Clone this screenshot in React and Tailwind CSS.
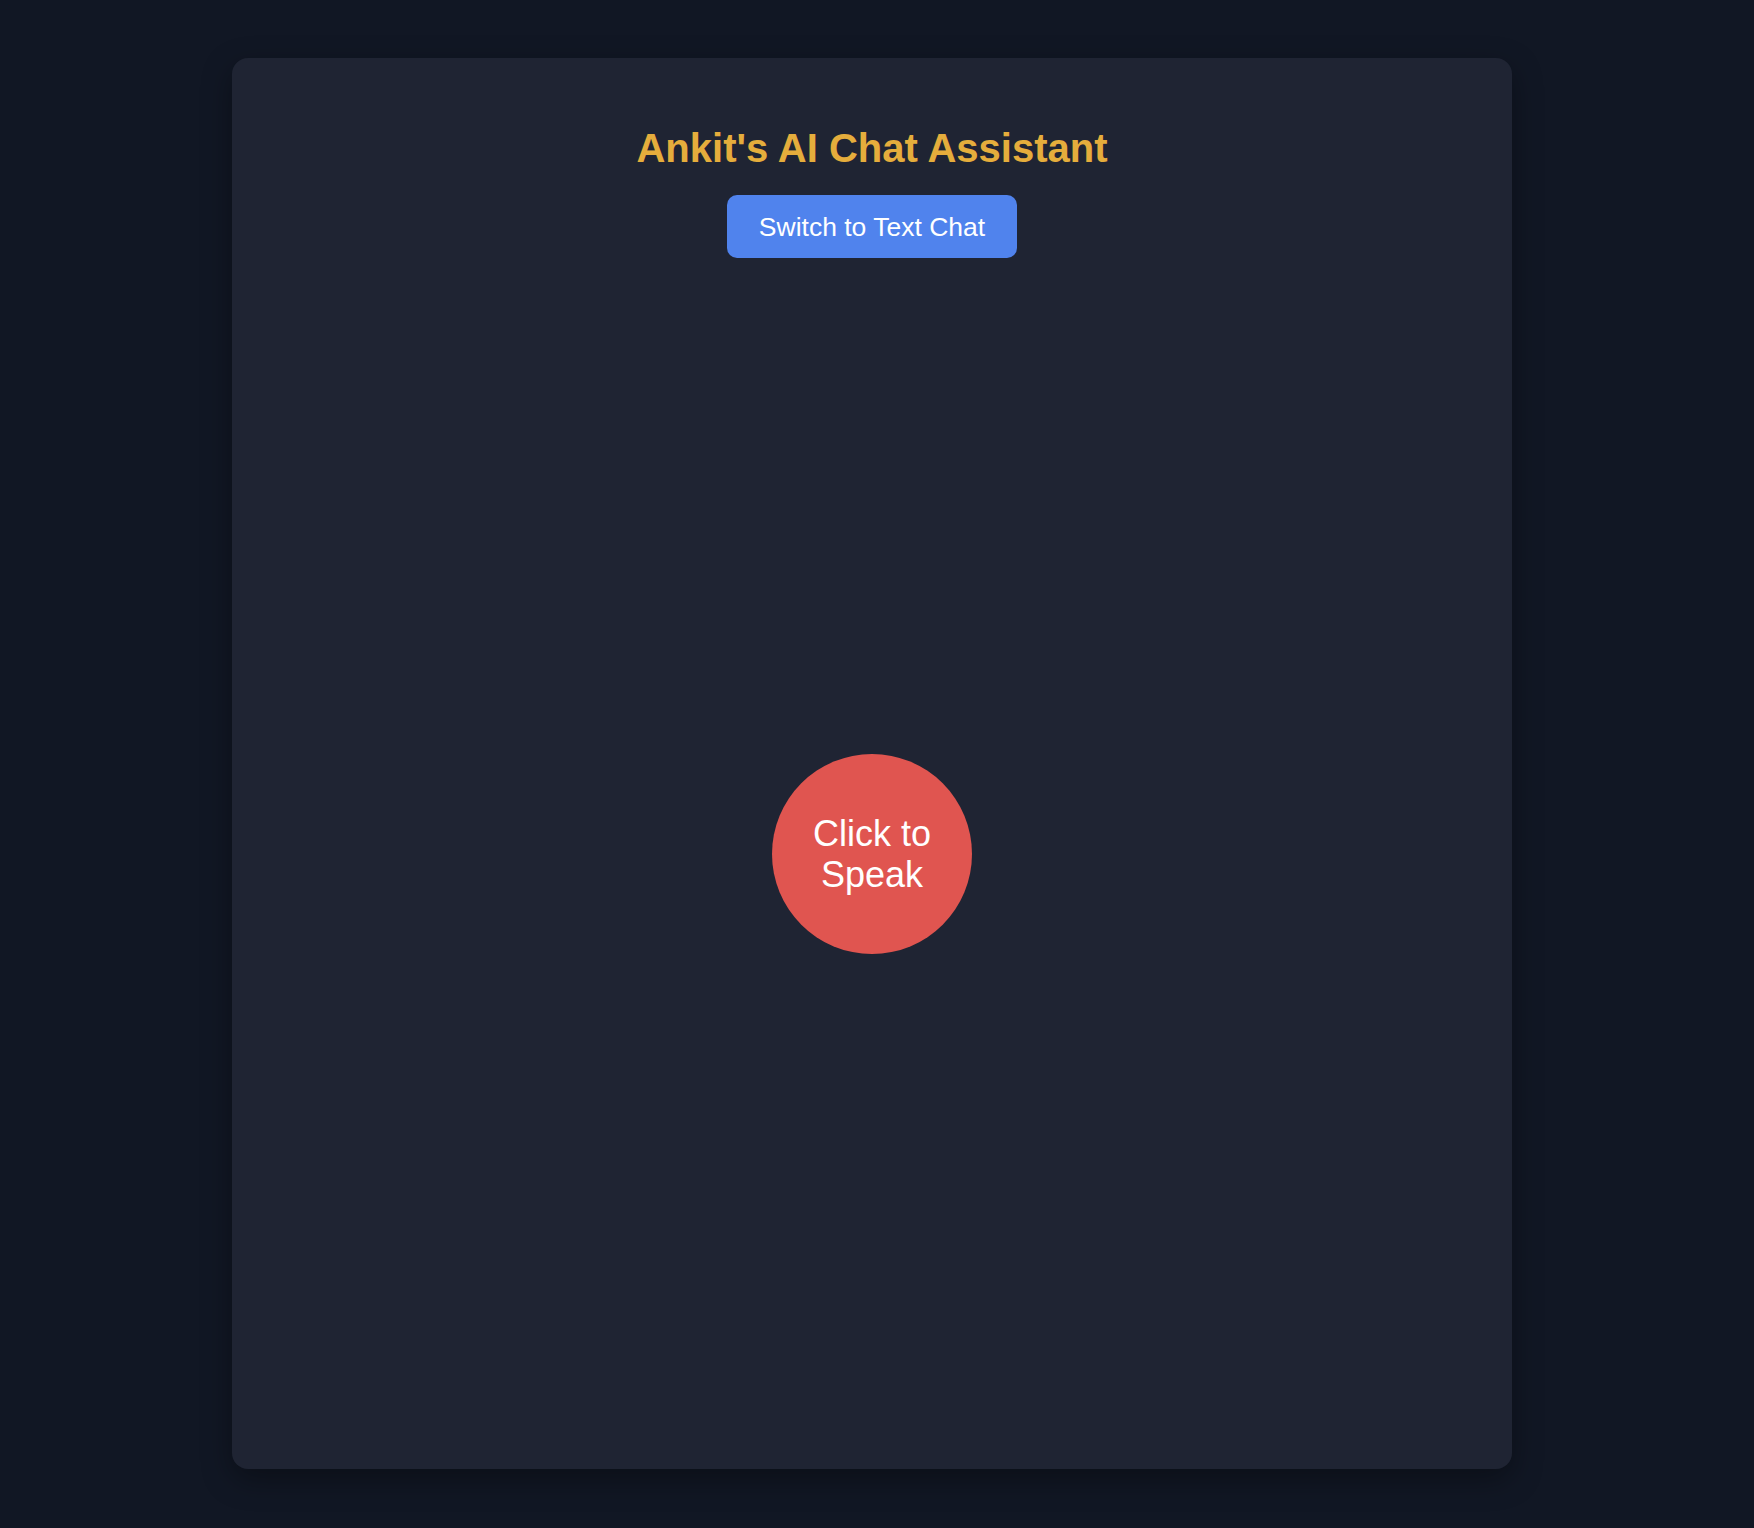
export default function App() {
  return (
    <div className="min-h-screen w-full bg-[#111724] flex justify-start pl-[232px] py-[58px]" style={{ fontFamily: '"Liberation Sans", Arial, sans-serif' }}>
      <div className="w-[1280px] h-[1411px] bg-[#1f2433] rounded-2xl shadow-[0_10px_30px_rgba(0,0,0,0.35)] flex flex-col items-center pt-[66px] pb-[68px]">
        <h1 className="text-[40px] leading-[48px] font-bold text-[#e5ad3c]">Ankit's AI Chat Assistant</h1>
        <button className="mt-[23px] h-[63px] px-8 rounded-[10px] bg-[#5083ed] text-white text-[26.5px] leading-[30px]">Switch to Text Chat</button>
        <div className="flex-1 mt-[49px] w-full flex items-center justify-center">
          <button className="w-[200px] h-[200px] rounded-full bg-[#e05550] text-white text-[36px] leading-[41px] flex items-center justify-center text-center px-8">Click to Speak</button>
        </div>
      </div>
    </div>
  );
}
